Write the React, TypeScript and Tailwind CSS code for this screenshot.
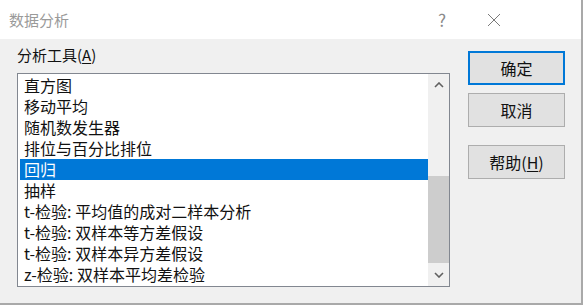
import React from 'react';

const FONT = { fontFamily: '"Noto Sans CJK SC", "Noto Sans", sans-serif' };

const tools = [
  '直方图',
  '移动平均',
  '随机数发生器',
  '排位与百分比排位',
  '回归',
  '抽样',
  't-检验: 平均值的成对二样本分析',
  't-检验: 双样本等方差假设',
  't-检验: 双样本异方差假设',
  'z-检验: 双样本平均差检验',
];

function DialogButton({
  children,
  primary = false,
}: {
  children: React.ReactNode;
  primary?: boolean;
}) {
  return (
    <button
      type="button"
      className={[
        'w-[97px] h-[34px] bg-[#e1e1e1] text-[16px] text-[#111] leading-none flex items-center justify-center',
        primary ? 'border-2 border-[#0078d7]' : 'border border-[#adadad]',
      ].join(' ')}
    >
      {children}
    </button>
  );
}

export default function App() {
  const selected = 4;

  return (
    <div
      className="w-[583px] h-[305px] bg-[#f0f0f0] border-r-2 border-b-2 border-[#a9a9a9] flex flex-col overflow-hidden"
      style={FONT}
    >
      {/* title bar */}
      <div className="h-[39px] bg-white flex items-center shrink-0">
        <span className="pl-[9px] text-[15px] text-[#9a9a9a] leading-none">数据分析</span>
        <span className="ml-auto mr-[41px] text-[17px] text-[#8a8a8a] leading-none">?</span>
        <svg width="14" height="14" viewBox="0 0 14 14" className="mr-[80px]">
          <path d="M1 1 L13 13 M13 1 L1 13" stroke="#7a7a7a" strokeWidth="1" />
        </svg>
      </div>

      {/* body */}
      <div className="flex pl-[17px]">
        <div className="w-[433px] pt-[6px]">
          <div className="h-[20px] leading-[20px] text-[15px] text-[#111]">
            分析工具(<span className="underline underline-offset-2">A</span>)
          </div>
          <div className="mt-[8px] h-[214px] border border-[#828790] bg-white flex">
            <div className="flex-1 pt-[1px] pl-[2px]">
              {tools.map((t, i) => (
                <div
                  key={t}
                  className={[
                    'h-[21px] leading-[21px] pl-[4px] text-[16px] whitespace-nowrap',
                    i === selected ? 'bg-[#0078d7] text-white' : 'text-[#111]',
                  ].join(' ')}
                >
                  {t}
                </div>
              ))}
            </div>
            {/* scrollbar */}
            <div className="w-[21px] bg-[#f0f0f0] flex flex-col">
              <div className="h-[22px] flex items-center justify-center">
                <svg width="10" height="6" viewBox="0 0 10 6">
                  <path d="M1 5 L5 1 L9 5" fill="none" stroke="#606060" strokeWidth="1.6" />
                </svg>
              </div>
              <div className="h-[80px]" />
              <div className="h-[87px] bg-[#cdcdcd]" />
              <div className="flex-1 flex items-center justify-center">
                <svg width="10" height="6" viewBox="0 0 10 6">
                  <path d="M1 1 L5 5 L9 1" fill="none" stroke="#606060" strokeWidth="1.6" />
                </svg>
              </div>
            </div>
          </div>
        </div>

        <div className="ml-[18px] pt-[12px] flex flex-col">
          <DialogButton primary>确定</DialogButton>
          <div className="mt-[8px]">
            <DialogButton>取消</DialogButton>
          </div>
          <div className="mt-[18px]">
            <DialogButton>
              帮助(<span className="underline underline-offset-2">H</span>)
            </DialogButton>
          </div>
        </div>
      </div>
    </div>
  );
}
